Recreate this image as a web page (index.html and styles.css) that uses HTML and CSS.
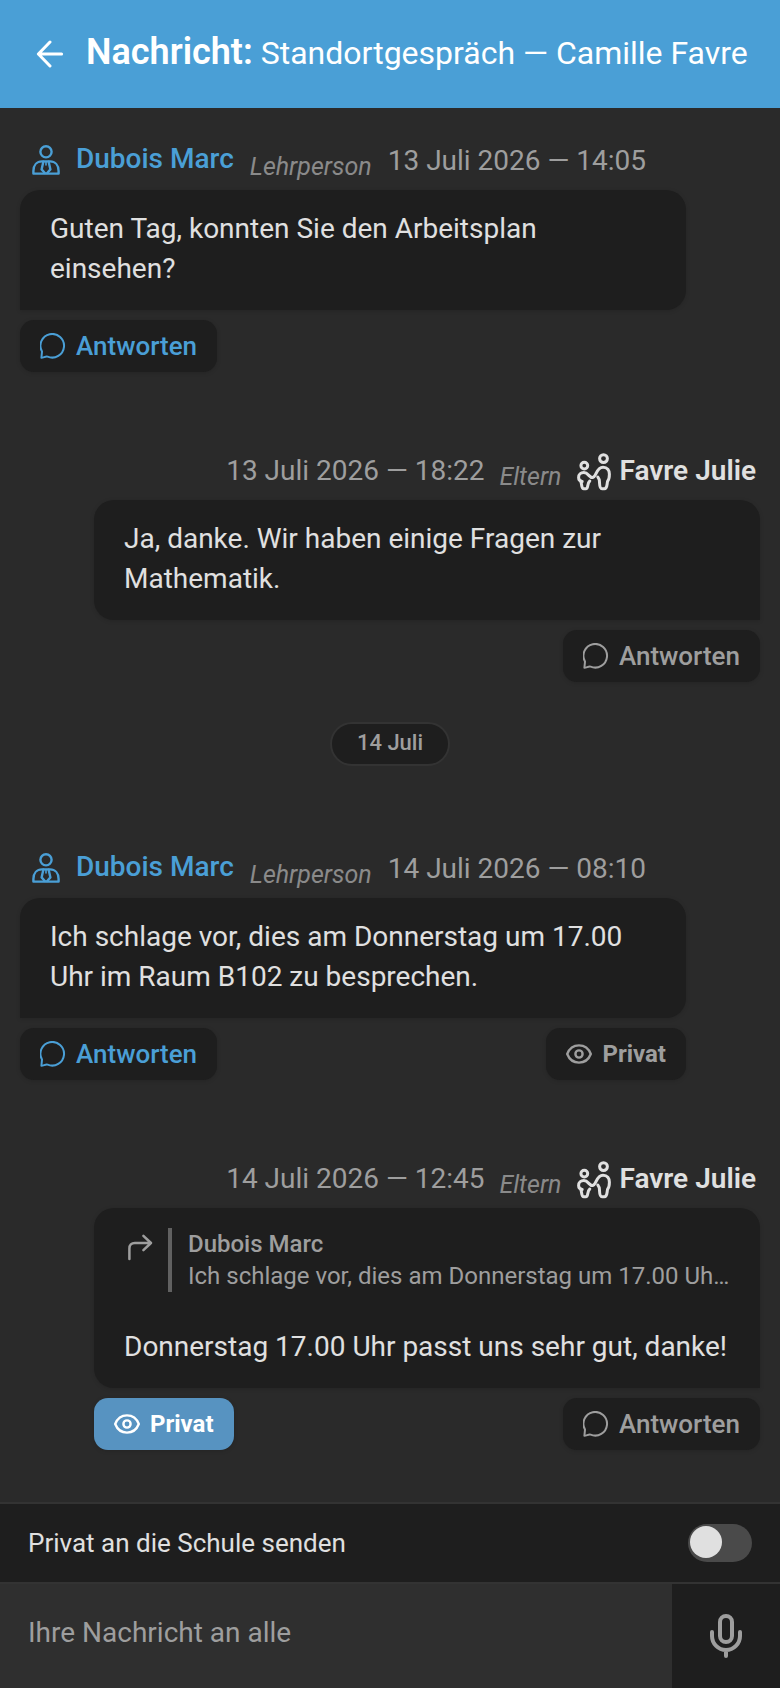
FILE: index.html
```
<!DOCTYPE html>
<html lang="de">
<head>
    <meta charset="UTF-8">
    <meta name="viewport" content="width=device-width, initial-scale=1.0">
    <title>Nachricht: Standortgespräch</title>

    <link rel="stylesheet" href="styles.css">
</head>
<body>
    <!-- Shared icons -->
    <svg class="sprite" aria-hidden="true">
        <symbol id="icon-teacher" viewBox="0 0 28 30">
            <circle cx="14" cy="6.8" r="5.6"/>
            <path d="M1.4 28.6V26C1.4 20 5 16.4 10 16.4H18C23 16.4 26.6 20 26.6 26V28.6Z"/>
            <path d="M11.4 16.6L9.6 24.4L12.8 28M16.6 16.6L18.4 24.4L15.2 28"/>
            <path d="M14 17.6V20" stroke-width="1.6"/>
        </symbol>
        <symbol id="icon-parent" viewBox="0 0 34 38">
            <circle cx="7.3" cy="12.6" r="3.4"/>
            <circle cx="26.5" cy="5.6" r="3.9"/>
            <path d="M5.2 28.4C2.8 28 1.6 26.6 1.6 24.4C1.6 21.4 3.8 19.6 6.8 19.6C11.4 19.6 12 24.6 15.4 24.6C19.6 24.6 18.8 14.2 26 14.2C30.4 14.2 32.4 17.4 32.4 21.2C32.4 24.4 32 26.6 30.6 28.2C29.8 31.4 30.4 35.8 27.4 35.8H25C21.8 35.8 23 30.4 22.2 26.4L20.8 24"/>
            <path d="M3.6 28C5.2 31 4 35.8 6.8 35.8H8.8C11.6 35.8 9.8 30.4 12.8 28"/>
        </symbol>
        <symbol id="icon-reply" viewBox="0 0 26 26">
            <path d="M1.4 24.8L2 18.6A11.8 11.8 0 1 1 7.6 23.6C5.8 22.8 3.6 24.8 1.4 24.8Z"/>
        </symbol>
        <symbol id="icon-eye" viewBox="0 0 26 20">
            <path d="M1.2 10C3.4 4.4 7.8 1.4 13 1.4S22.6 4.4 24.8 10C22.6 15.6 18.2 18.6 13 18.6S3.4 15.6 1.2 10Z"/>
            <circle cx="13" cy="10" r="3.6"/>
        </symbol>
    </svg>

    <header class="topbar">
        <button class="back" type="button" aria-label="Zurück">
            <svg class="icon-back" viewBox="0 0 28 28"><path d="M25.6 14H2.4M14 2L2.4 14L14 26"/></svg>
        </button>
        <h1 class="title"><strong>Nachricht:</strong> Standortgespräch — Camille Favre</h1>
    </header>

    <main class="chat">
        <article class="message">
            <div class="head">
                <svg class="icon-teacher"><use href="#icon-teacher"/></svg>
                <span class="name">Dubois Marc</span>
                <span class="role">Lehrperson</span>
                <time class="date">13 Juli 2026 — 14:05</time>
            </div>
            <div class="bubble">
                <p class="text">Guten Tag, konnten Sie den Arbeitsplan einsehen?</p>
            </div>
            <div class="actions">
                <button class="btn reply" type="button"><svg class="icon-reply"><use href="#icon-reply"/></svg>Antworten</button>
            </div>
        </article>

        <article class="message own">
            <div class="head">
                <time class="date">13 Juli 2026 — 18:22</time>
                <span class="role">Eltern</span>
                <svg class="icon-parent"><use href="#icon-parent"/></svg>
                <span class="name">Favre Julie</span>
            </div>
            <div class="bubble">
                <p class="text">Ja, danke. Wir haben einige Fragen zur Mathematik.</p>
            </div>
            <div class="actions">
                <button class="btn reply" type="button"><svg class="icon-reply"><use href="#icon-reply"/></svg>Antworten</button>
            </div>
        </article>

        <div class="day">14 Juli</div>

        <article class="message">
            <div class="head">
                <svg class="icon-teacher"><use href="#icon-teacher"/></svg>
                <span class="name">Dubois Marc</span>
                <span class="role">Lehrperson</span>
                <time class="date">14 Juli 2026 — 08:10</time>
            </div>
            <div class="bubble">
                <p class="text">Ich schlage vor, dies am Donnerstag um 17.00 Uhr im Raum B102 zu besprechen.</p>
            </div>
            <div class="actions">
                <button class="btn reply" type="button"><svg class="icon-reply"><use href="#icon-reply"/></svg>Antworten</button>
                <button class="btn private" type="button"><svg class="icon-eye"><use href="#icon-eye"/></svg>Privat</button>
            </div>
        </article>

        <article class="message own">
            <div class="head">
                <time class="date">14 Juli 2026 — 12:45</time>
                <span class="role">Eltern</span>
                <svg class="icon-parent"><use href="#icon-parent"/></svg>
                <span class="name">Favre Julie</span>
            </div>
            <div class="bubble">
                <div class="quote">
                    <svg class="icon-quote" viewBox="0 0 28 28"><path d="M3.4 25V14.4C3.4 11 5.4 9 8.8 9H25M17.4 1.8L25 9L17.4 16.2"/></svg>
                    <blockquote class="quote-body">
                        <cite class="quote-name">Dubois Marc</cite>
                        <p class="quote-text">Ich schlage vor, dies am Donnerstag um 17.00 Uhr im Raum B102 zu besprechen.</p>
                    </blockquote>
                </div>
                <p class="text">Donnerstag 17.00 Uhr passt uns sehr gut, danke!</p>
            </div>
            <div class="actions">
                <button class="btn reply" type="button"><svg class="icon-reply"><use href="#icon-reply"/></svg>Antworten</button>
                <button class="btn private active" type="button" aria-pressed="true"><svg class="icon-eye"><use href="#icon-eye"/></svg>Privat</button>
            </div>
        </article>
    </main>

    <footer class="composer">
        <div class="private-row">
            <label for="privat">Privat an die Schule senden</label>
            <input class="switch" type="checkbox" role="switch" id="privat">
        </div>
        <div class="input-row">
            <input class="field" type="text" placeholder="Ihre Nachricht an alle" aria-label="Ihre Nachricht an alle">
            <button class="mic" type="button" aria-label="Sprachnachricht">
                <svg class="icon-mic" viewBox="0 0 32 44"><rect x="10" y="2" width="12" height="26" rx="6"/><path d="M2 18V22A14 14 0 0 0 30 22V18M16 36V42"/></svg>
            </button>
        </div>
    </footer>
</body>
</html>
```

FILE: styles.css
```
:root {
    --blue: #4a9fd6;
    --bg: #2a2a2a;
    --surface: #1e1e1e;
    --line: #2f2f2f;
    --text: #e0e0e0;
    --muted: #9e9e9e;
}

* {
    box-sizing: border-box;
}

body {
    margin: 0;
    min-height: 100vh;
    display: flex;
    flex-direction: column;
    background: var(--bg);
    color: var(--text);
    font-family: Roboto, "Liberation Sans", sans-serif;
    font-size: 28px;
    line-height: 40px;
}

p {
    margin: 0;
}

button {
    border: 0;
    font-family: inherit;
    cursor: pointer;
}

svg {
    flex: none;
    fill: none;
    stroke: currentColor;
    stroke-width: 2;
    stroke-linecap: round;
    stroke-linejoin: round;
}

.sprite {
    position: absolute;
    width: 0;
    height: 0;
}

/* Header */
.topbar {
    display: flex;
    align-items: center;
    gap: 22px;
    height: 108px;
    padding: 0 24px 0 36px;
    background: var(--blue);
    color: #fff;
}

.back {
    display: flex;
    padding: 0;
    background: none;
    color: inherit;
}

.icon-back {
    width: 28px;
    height: 28px;
    stroke-width: 3;
}

.title {
    margin: 0;
    padding-bottom: 3px;
    font-size: 32px;
    font-weight: 400;
    white-space: nowrap;
}

.title strong {
    font-size: 36px;
    font-weight: 600;
}

/* Messages */
.chat {
    flex: 1;
    display: flex;
    flex-direction: column;
    padding: 0 20px 6px;
}

.message {
    width: 90%;
    margin: 28px 0 46px;
}

.own {
    align-self: flex-end;
}

.head {
    display: flex;
    align-items: flex-end;
    gap: 16px;
    height: 54px;
    padding: 0 4px 9px 12px;
    white-space: nowrap;
}

.own .head {
    justify-content: flex-end;
    gap: 15px;
}

.name {
    color: var(--blue);
    font-weight: 500;
    line-height: 44px;
}

.own .name {
    margin-left: -6px;
    color: var(--text);
    font-weight: 600;
    line-height: 40px;
}

.role {
    color: #8a8a8a;
    font-size: 25px;
    font-style: italic;
    line-height: 29px;
}

.date {
    color: var(--muted);
}

.icon-teacher {
    width: 28px;
    height: 30px;
    margin-bottom: 6px;
    color: var(--blue);
    stroke-width: 2.4;
}

.icon-parent {
    width: 34px;
    height: 38px;
    stroke-width: 3;
}

.bubble {
    padding: 19px 30px 21px;
    background: var(--surface);
    border-radius: 20px 20px 20px 0;
    box-shadow: 0 1px 4px rgba(0, 0, 0, .15);
}

.own .bubble {
    border-radius: 20px 20px 0 20px;
}

.quote {
    display: flex;
    gap: 14px;
    margin: 1px 0 35px;
    padding-left: 2px;
    color: var(--muted);
}

.icon-quote {
    width: 28px;
    height: 28px;
    margin-top: 6px;
    stroke-width: 2.5;
}

.quote-body {
    min-width: 0;
    margin: 0;
    padding-left: 16px;
    border-left: 4px solid #616161;
    font-size: 24px;
    line-height: 32px;
}

.quote-name {
    display: block;
    font-style: normal;
    font-weight: 500;
}

.quote-text {
    overflow: hidden;
    text-overflow: ellipsis;
    white-space: nowrap;
}

.actions {
    display: flex;
    justify-content: space-between;
    margin-top: 10px;
}

.own .actions {
    flex-direction: row-reverse;
}

.btn {
    display: flex;
    align-items: center;
    gap: 10px;
    height: 52px;
    padding: 0 20px;
    border-radius: 14px;
    background: var(--surface);
    box-shadow: 0 1px 4px rgba(0, 0, 0, .15);
    color: var(--muted);
    font-size: 26px;
    font-weight: 500;
}

.message:not(.own) .reply {
    color: var(--blue);
}

.private {
    font-size: 24px;
    font-weight: 700;
}

.private.active {
    background: #5793c1;
    color: #fff;
}

.icon-reply {
    width: 26px;
    height: 26px;
}

.icon-eye {
    width: 26px;
    height: 20px;
    stroke-width: 2.4;
}

.day {
    align-self: center;
    height: 44px;
    margin: -6px 0 50px;
    padding: 0 25px;
    border: 2px solid #333;
    border-radius: 22px;
    background: var(--surface);
    color: var(--muted);
    font-size: 22px;
    font-weight: 500;
    line-height: 38px;
}

/* Composer */
.composer {
    border-top: 2px solid #333;
    background: var(--surface);
}

.private-row {
    display: flex;
    align-items: center;
    justify-content: space-between;
    height: 80px;
    padding: 0 28px;
    border-bottom: 2px solid #333;
    font-size: 26px;
}

.switch {
    appearance: none;
    display: flex;
    width: 64px;
    height: 38px;
    margin: 0;
    padding: 2px;
    border-radius: 19px;
    background: #4a4a4a;
    cursor: pointer;
}

.switch::before {
    content: "";
    width: 32px;
    height: 32px;
    border-radius: 50%;
    background: var(--text);
}

.switch:checked {
    justify-content: flex-end;
    background: var(--blue);
}

.input-row {
    display: flex;
    height: 104px;
}

.field {
    flex: 1;
    min-width: 0;
    padding: 0 28px 8px;
    border: 0;
    outline: 0;
    background: var(--line);
    color: var(--text);
    font-family: inherit;
    font-size: 28px;
}

.field::placeholder {
    color: var(--muted);
}

.mic {
    display: flex;
    align-items: center;
    justify-content: center;
    width: 108px;
    background: var(--surface);
    color: var(--muted);
}

.icon-mic {
    width: 32px;
    height: 44px;
    stroke-width: 4;
}
```
